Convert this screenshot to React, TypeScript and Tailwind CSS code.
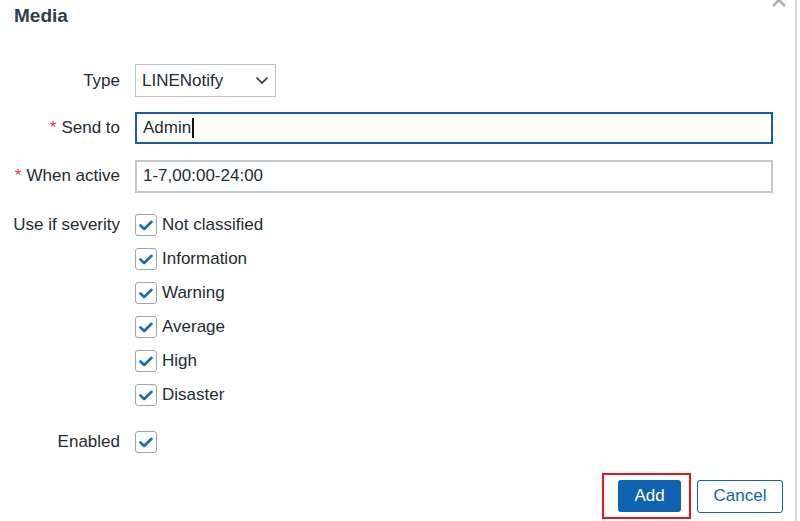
import React from "react";

const font = { fontFamily: '"Liberation Sans", Arial, sans-serif' };

function Check() {
  return (
    <div className="w-[22px] h-[22px] border border-[#9aa7b0] rounded-[3px] bg-white flex items-center justify-center shrink-0">
      <svg width="14" height="11" viewBox="0 0 14 11" fill="none">
        <path d="M1.5 5.5 L5.2 9 L12.5 1.8" stroke="#1b6bb8" strokeWidth="2.6" strokeLinecap="round" strokeLinejoin="round" />
      </svg>
    </div>
  );
}

function Label({ children, req }: { children: React.ReactNode; req?: boolean }) {
  return (
    <div className="w-[120px] shrink-0 text-right pr-0 text-[17px] text-[#1f2c33]">
      {req && <span className="text-[#e33734] mr-[5px]">*</span>}
      {children}
    </div>
  );
}

export default function App() {
  const sev = ["Not classified", "Information", "Warning", "Average", "High", "Disaster"];
  return (
    <div style={font} className="relative w-[800px] h-[521px] bg-white overflow-hidden">
      <div className="w-[797px] h-[521px] border-r-2 border-[#d5dadd] relative">
        <div className="absolute right-[8px] top-[-8px]">
          <svg width="16" height="16" viewBox="0 0 16 16">
            <path d="M2 2 L14 14 M14 2 L2 14" stroke="#a9b2b9" strokeWidth="2.6" />
          </svg>
        </div>
        <div className="pl-[14px] pt-[4px] h-[64px] text-[19px] font-bold text-[#2d3f4e] leading-[24px]">Media</div>

        <div className="flex items-center h-[33px]">
          <Label>Type</Label>
          <div className="ml-[15px] w-[141px] h-[33px] border border-[#b8c3c8] flex items-center justify-between pl-[6px] pr-[6px] text-[17px] text-[#1f2c33]">
            <span>LINENotify</span>
            <svg width="14" height="9" viewBox="0 0 14 9" fill="none">
              <path d="M1.5 1.5 L7 7 L12.5 1.5" stroke="#333" strokeWidth="1.6" />
            </svg>
          </div>
        </div>

        <div className="flex items-center h-[32px] mt-[15px]">
          <Label req>Send to</Label>
          <div className="ml-[15px] w-[638px] h-[32px] border-2 border-[#1b5c9e] flex items-center pl-[6px] text-[17px] text-[#1f2c33]">
            <span>Admin</span>
            <span className="w-[2px] h-[20px] bg-[#111] ml-[1px]" />
          </div>
        </div>

        <div className="flex items-center h-[32px] mt-[16px]">
          <Label req>When active</Label>
          <div className="ml-[15px] w-[638px] h-[33px] border-2 border-[#c0c9cd] flex items-center pl-[6px] text-[17px] text-[#1f2c33]">
            1-7,00:00-24:00
          </div>
        </div>

        <div className="flex mt-[22px]">
          <div className="w-[120px] shrink-0 text-right text-[17px] text-[#1f2c33] leading-[22px]">Use if severity</div>
          <div className="ml-[15px] flex flex-col gap-[12px]">
            {sev.map((s) => (
              <div key={s} className="flex items-center h-[22px] gap-[5px] text-[17px] text-[#1f2c33]">
                <Check />
                <span>{s}</span>
              </div>
            ))}
          </div>
        </div>

        <div className="flex items-center h-[22px] mt-[25px]">
          <Label>Enabled</Label>
          <div className="ml-[15px]">
            <Check />
          </div>
        </div>

        <div className="flex justify-end items-center mt-[20px] pr-[12px] gap-[6px]">
          <div className="border-2 border-[#e0161f] w-[89px] h-[46px] flex items-center pl-[14px]">
            <div className="w-[63px] h-[32px] bg-[#0f63b0] rounded-[3px] text-white text-[17px] flex items-center justify-center">Add</div>
          </div>
          <div className="w-[86px] h-[33px] border border-[#0f63b0] rounded-[3px] text-[#0f63b0] text-[17px] flex items-center justify-center">Cancel</div>
        </div>
      </div>
    </div>
  );
}
